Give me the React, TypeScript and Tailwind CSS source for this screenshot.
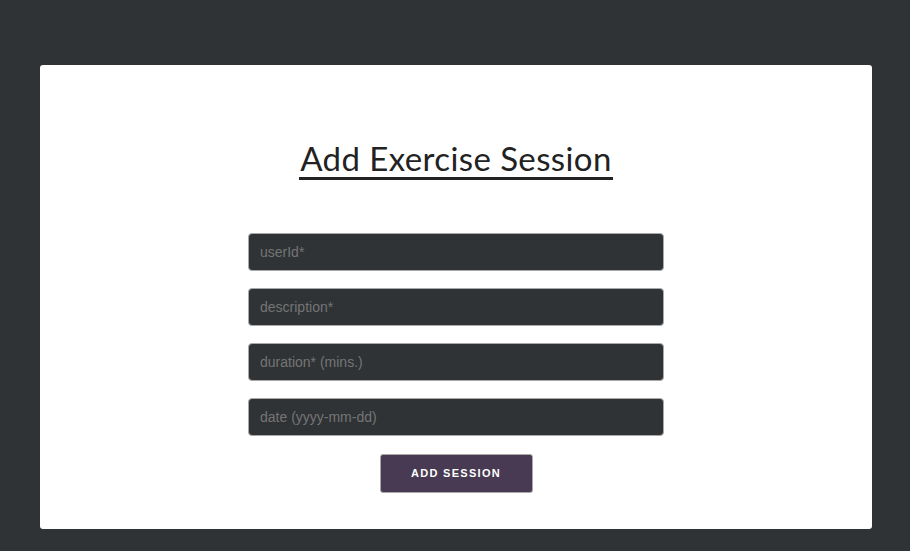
export default function App() {
  return (
    <div className="min-h-screen bg-[#2f3335] pt-[65px] pb-[22px] px-[38px] font-['Liberation_Sans',Arial,sans-serif]">
      <div className="bg-white rounded-[3px] h-[464px] flex flex-col items-center pt-[76px] ml-[2px]">
        <h1 className="font-['Lato',sans-serif] text-[33px] leading-[35px] tracking-[0.4px] text-[#222] border-b-[3px] border-[#222] pb-[1px] px-[1px]">
          Add Exercise Session
        </h1>
        <form className="mt-[53px] w-[416px] flex flex-col gap-[17px]">
          <input
            placeholder="userId*"
            className="h-[38px] w-full rounded-[4px] border border-[#a9a9a9] bg-[#2f3335] px-[11px] text-[14px] text-white placeholder:text-[#757575] outline-none"
          />
          <input
            placeholder="description*"
            className="h-[38px] w-full rounded-[4px] border border-[#a9a9a9] bg-[#2f3335] px-[11px] text-[14px] text-white placeholder:text-[#757575] outline-none"
          />
          <input
            placeholder="duration* (mins.)"
            className="h-[38px] w-full rounded-[4px] border border-[#a9a9a9] bg-[#2f3335] px-[11px] text-[14px] text-white placeholder:text-[#757575] outline-none"
          />
          <input
            placeholder="date (yyyy-mm-dd)"
            className="h-[38px] w-full rounded-[4px] border border-[#a9a9a9] bg-[#2f3335] px-[11px] text-[14px] text-white placeholder:text-[#757575] outline-none"
          />
        </form>
        <button
          type="button"
          className="mt-[18px] h-[39px] w-[153px] rounded-[3px] border border-[#a9a9a9] bg-[#473a52] text-[11px] font-bold tracking-[1.3px] text-white"
        >
          ADD SESSION
        </button>
      </div>
    </div>
  );
}
